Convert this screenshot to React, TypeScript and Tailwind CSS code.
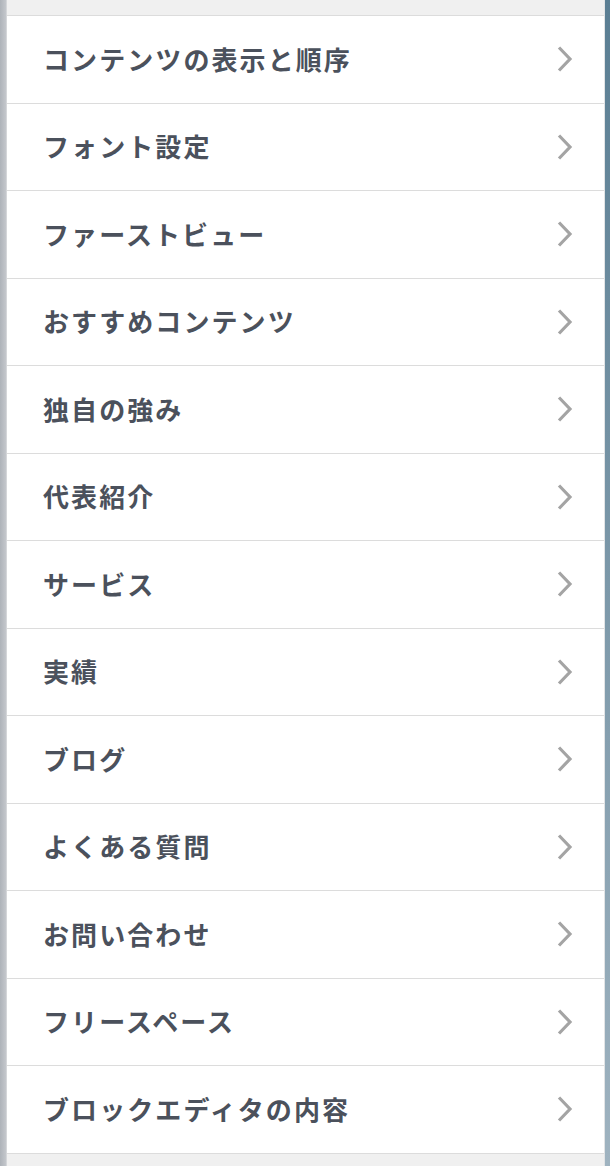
const items = [
  "コンテンツの表示と順序",
  "フォント設定",
  "ファーストビュー",
  "おすすめコンテンツ",
  "独自の強み",
  "代表紹介",
  "サービス",
  "実績",
  "ブログ",
  "よくある質問",
  "お問い合わせ",
  "フリースペース",
  "ブロックエディタの内容",
]

function Chevron() {
  return (
    <svg width="18" height="28" viewBox="0 0 18 28" fill="none" aria-hidden="true">
      <polyline
        points="3,2.5 14,14 3,25.5"
        stroke="#a4a4a4"
        strokeWidth="3.2"
        strokeLinecap="butt"
        strokeLinejoin="miter"
      />
    </svg>
  )
}

export default function App() {
  return (
    <div
      className="flex h-[1166px] w-[610px] overflow-hidden bg-white"
      style={{ fontFamily: '"Noto Sans CJK JP", "Noto Sans", sans-serif' }}
    >
      {/* Left edge */}
      <div className="w-[7px] shrink-0 border-r border-[#d4d6d9] bg-gradient-to-r from-[#aeb3b9] to-[#c4c7cc]" />

      {/* Panel */}
      <div className="flex flex-1 flex-col bg-[#f0f0f0]">
        <div className="h-[16px] shrink-0 border-b border-[#dcdcdc]" />
        <ul className="flex flex-col bg-white">
          {items.map((label) => (
            <li
              key={label}
              className="flex h-[87.5px] items-center justify-between border-b border-[#dcdcdc] pr-[30px] pl-[36px]"
            >
              <span className="-mt-[2px] text-[26px] font-bold tracking-[0.08em] text-[#4b515c]">
                {label}
              </span>
              <Chevron />
            </li>
          ))}
        </ul>
        <div className="flex-1" />
      </div>

      {/* Right edge */}
      <div className="w-[6px] shrink-0 border-l border-[#e2e4e6] bg-gradient-to-b from-[#5a7e93] via-[#7c98a9] to-[#9fb3c0]" />
    </div>
  )
}
